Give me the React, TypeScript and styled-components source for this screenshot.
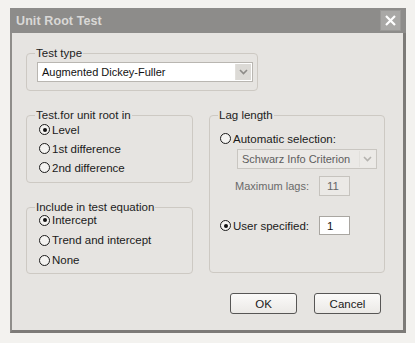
import React from "react";
import styled, { createGlobalStyle } from "styled-components";

const GlobalStyle = createGlobalStyle`
  html, body {
    margin: 0;
    padding: 0;
    background: #f3f2ef;
  }
  body {
    font-family: "Liberation Sans", Arial, sans-serif;
    font-size: 11px;
    color: #1a1a1a;
  }
`;

const Page = styled.div`
  padding: 8px 0 0 10px;
`;

const Window = styled.div`
  width: 396px;
  height: 325px;
  box-sizing: border-box;
  display: flex;
  flex-direction: column;
  background: #e6e4e1;
  border-left: 2px solid #8f8d8a;
  border-right: 3px solid #7d7b78;
  border-bottom: 3px solid #7d7b78;
`;

const TitleBar = styled.div`
  height: 25px;
  flex: none;
  display: flex;
  align-items: center;
  justify-content: space-between;
  padding: 0 3px 0 6px;
  background: #8d8c8a;
  margin-left: -2px;
  margin-right: -3px;
`;

const Title = styled.span`
  font-weight: bold;
  font-size: 12.5px;
  color: #d9d8d6;
  letter-spacing: 0.1px;
`;

const CloseButton = styled.div`
  width: 19px;
  height: 19px;
  margin-right: 2px;
  background: #a9a8a6;
  border: 1px solid #9a9997;
  display: flex;
  align-items: center;
  justify-content: center;
`;

const Body = styled.div`
  flex: 1;
  padding: 14px 0 0 14px;
  display: flex;
  flex-direction: column;
`;

const Group = styled.fieldset<{ $w: number; $h: number; $inset?: number }>`
  margin: 0;
  width: ${(p) => p.$w}px;
  height: ${(p) => p.$h}px;
  box-sizing: border-box;
  border: 1px solid #cdc9c3;
  border-radius: 4px;
  padding: 0 0 0 ${(p) => p.$inset ?? 10}px;
  min-width: 0;
`;

const Legend = styled.legend<{ $shift?: number }>`
  padding: 0 1px;
  margin-left: ${(p) => -2 - (p.$shift ?? 0)}px;
  line-height: 12px;
  font-size: 11.5px;
  color: #222;
`;

const Combo = styled.div<{ $disabled?: boolean }>`
  display: flex;
  align-items: center;
  justify-content: space-between;
  box-sizing: border-box;
  height: 20px;
  border: 1px solid ${(p) => (p.$disabled ? "#c9c6c1" : "#b9b6b1")};
  background: ${(p) => (p.$disabled ? "#ebe9e6" : "#ffffff")};
  color: ${(p) => (p.$disabled ? "#5e5e5e" : "#111")};
  padding-left: 4px;
  font-size: 11px;
  white-space: nowrap;
`;

const ComboArrow = styled.div<{ $disabled?: boolean }>`
  width: 15px;
  height: 16px;
  margin-right: 1px;
  display: flex;
  align-items: center;
  justify-content: center;
  background: ${(p) => (p.$disabled ? "#eceae7" : "#dcdad6")};
  border-left: 1px solid #e2e0dc;
`;

const Columns = styled.div`
  display: flex;
  gap: 16px;
  margin-top: 18px;
`;

const LeftColumn = styled.div`
  display: flex;
  flex-direction: column;
  gap: 18px;
`;

const RadioList = styled.div<{ $row: number }>`
  display: flex;
  flex-direction: column;
  margin-top: ${(p) => (p.$row > 19 ? -3 : -1)}px;
  & > * {
    height: ${(p) => p.$row}px;
  }
`;

const RadioRow = styled.label`
  display: flex;
  align-items: center;
  gap: 2px;
  font-size: 11.5px;
  color: #1a1a1a;
  white-space: nowrap;
`;

const Circle = styled.span<{ $on?: boolean }>`
  width: 9px;
  height: 9px;
  flex: none;
  border: 1.6px solid #1b1b1b;
  border-radius: 50%;
  background: #f4f3f1;
  display: flex;
  align-items: center;
  justify-content: center;
  &::after {
    content: "";
    width: 4px;
    height: 4px;
    border-radius: 50%;
    background: ${(p) => (p.$on ? "#111" : "transparent")};
  }
`;

const LagBody = styled.div`
  display: flex;
  flex-direction: column;
`;

const LagRow = styled.div<{ $top: number }>`
  display: grid;
  grid-template-columns: 99px 31px;
  align-items: center;
  margin-top: ${(p) => p.$top}px;
`;

const SubLabel = styled.span`
  padding-left: 15px;
  color: #6a6a6a;
  font-size: 11px;
`;

const NumberBox = styled.div<{ $disabled?: boolean; $h: number }>`
  box-sizing: border-box;
  height: ${(p) => p.$h}px;
  border: 1px solid ${(p) => (p.$disabled ? "#c6c3be" : "#a9a6a1")};
  background: ${(p) => (p.$disabled ? "#ebe9e6" : "#ffffff")};
  color: ${(p) => (p.$disabled ? "#666" : "#111")};
  display: flex;
  align-items: center;
  padding-left: 7px;
  font-size: 11.5px;
`;

const ButtonRow = styled.div`
  display: flex;
  justify-content: flex-end;
  gap: 17px;
  margin-top: 19px;
  padding-right: 22px;
`;

const Button = styled.button`
  width: 67px;
  height: 21px;
  border: 1px solid #575655;
  border-radius: 3px;
  background: linear-gradient(#fbfaf9, #ebe9e6);
  font-family: "Liberation Sans", Arial, sans-serif;
  font-size: 11.5px;
  color: #1a1a1a;
  padding: 0;
`;

const Chevron = ({ color }: { color: string }) => (
  <svg width="9" height="6" viewBox="0 0 9 6">
    <path d="M1 1 L4.5 4.5 L8 1" fill="none" stroke={color} strokeWidth="1.6" />
  </svg>
);

const Radio = ({ on, label }: { on?: boolean; label: string }) => (
  <RadioRow>
    <Circle $on={on} />
    {label}
  </RadioRow>
);

export default function App() {
  return (
    <Page>
      <GlobalStyle />
      <Window>
        <TitleBar>
          <Title>Unit Root Test</Title>
          <CloseButton>
            <svg width="13" height="13" viewBox="0 0 13 13">
              <path d="M2 2 L11 11 M11 2 L2 11" stroke="#ffffff" strokeWidth="2.2" />
            </svg>
          </CloseButton>
        </TitleBar>
        <Body>
          <Group $w={232} $h={44}>
            <Legend>Test type</Legend>
            <Combo style={{ width: 216, marginTop: 3 }}>
              Augmented Dickey-Fuller
              <ComboArrow>
                <Chevron color="#8d8b88" />
              </ComboArrow>
            </Combo>
          </Group>

          <Columns>
            <LeftColumn>
              <Group $w={167} $h={74} $inset={12}>
                <Legend $shift={2}>Test.for unit root in</Legend>
                <RadioList $row={19}>
                  <Radio on label="Level" />
                  <Radio label="1st difference" />
                  <Radio label="2nd difference" />
                </RadioList>
              </Group>
              <Group $w={167} $h={73} $inset={12}>
                <Legend $shift={2}>Include in test equation</Legend>
                <RadioList $row={20}>
                  <Radio on label="Intercept" />
                  <Radio label="Trend and intercept" />
                  <Radio label="None" />
                </RadioList>
              </Group>
            </LeftColumn>

            <Group $w={176} $h={164}>
              <Legend>Lag length</Legend>
              <LagBody>
                <RadioRow style={{ height: 19, marginTop: 8 }}>
                  <Circle />
                  Automatic selection:
                </RadioRow>
                <Combo $disabled style={{ width: 140, marginLeft: 17, marginTop: 1 }}>
                  Schwarz Info Criterion
                  <ComboArrow $disabled>
                    <Chevron color="#b5b3af" />
                  </ComboArrow>
                </Combo>
                <LagRow $top={7}>
                  <SubLabel>Maximum lags:</SubLabel>
                  <NumberBox $disabled $h={20}>11</NumberBox>
                </LagRow>
                <LagRow $top={20}>
                  <RadioRow>
                    <Circle $on />
                    User specified:
                  </RadioRow>
                  <NumberBox $h={19}>1</NumberBox>
                </LagRow>
              </LagBody>
            </Group>
          </Columns>

          <ButtonRow>
            <Button>OK</Button>
            <Button>Cancel</Button>
          </ButtonRow>
        </Body>
      </Window>
    </Page>
  );
}
